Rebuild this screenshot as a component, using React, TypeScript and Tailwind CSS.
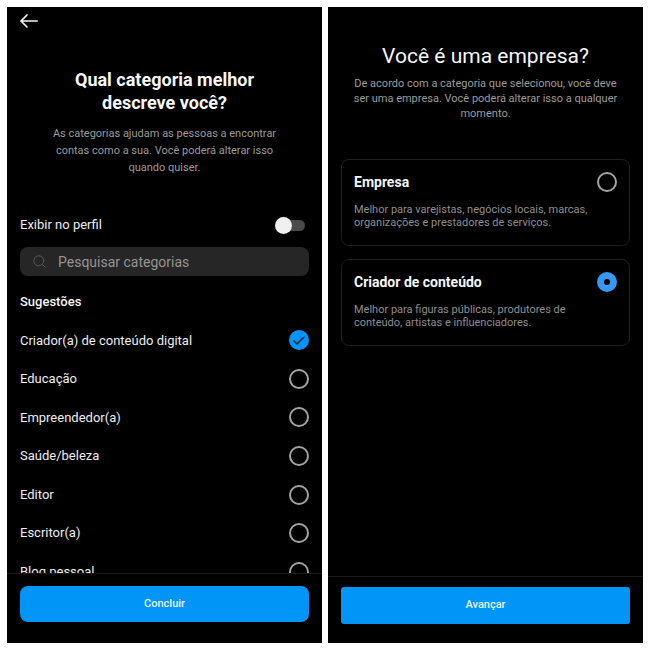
import { useState } from "react";

const categories = [
  "Criador(a) de conteúdo digital",
  "Educação",
  "Empreendedor(a)",
  "Saúde/beleza",
  "Editor",
  "Escritor(a)",
  "Blog pessoal",
];

const accountTypes = [
  {
    id: "empresa",
    title: "Empresa",
    text: "Melhor para varejistas, negócios locais, marcas, organizações e prestadores de serviços.",
  },
  {
    id: "criador",
    title: "Criador de conteúdo",
    text: "Melhor para figuras públicas, produtores de conteúdo, artistas e influenciadores.",
  },
];

function BackIcon() {
  return (
    <svg width="18" height="14" viewBox="0 0 18 14" fill="none" stroke="#f5f5f5" strokeWidth="1.7" strokeLinecap="round" strokeLinejoin="round" aria-hidden="true">
      <path d="M17.2 7H1.2M7 1 1 7l6 6" />
    </svg>
  );
}

function SearchIcon() {
  return (
    <svg width="13" height="13" viewBox="0 0 13 13" fill="none" stroke="#595959" strokeWidth="1" strokeLinecap="round" aria-hidden="true">
      <circle cx="5.8" cy="5.8" r="5" />
      <path d="m9.5 9.5 2.8 2.8" />
    </svg>
  );
}

function CategoryScreen() {
  const [selected, setSelected] = useState(categories[0]);
  return (
    <section className="flex h-full min-w-0 flex-1 flex-col bg-black">
      <header className="flex h-7 shrink-0 items-center px-[13px]">
        <button type="button" aria-label="Voltar">
          <BackIcon />
        </button>
      </header>
      <div className="flex min-h-0 flex-1 flex-col overflow-hidden px-[13px]">
        <h1 className="mx-auto mt-[33px] w-[200px] text-center text-lg leading-[23px] font-bold text-[#f7f7f7]">
          Qual categoria melhor descreve você?
        </h1>
        <p className="mx-auto mt-[11px] w-[240px] text-center text-[11px] leading-[17px] text-[#9b9b9b]">
          As categorias ajudam as pessoas a encontrar contas como a sua. Você poderá alterar isso quando quiser.
        </p>
        <label className="mt-10 flex h-[18px] shrink-0 items-center justify-between text-[13px] text-[#ededed]">
          Exibir no perfil
          <input
            type="checkbox"
            role="switch"
            className="relative mr-1 h-[11px] w-6 appearance-none rounded-full bg-[#4b4b4b] before:absolute before:top-[-3px] before:left-[-6px] before:size-[17px] before:rounded-full before:bg-[#f0f0f0] checked:bg-[#0095f6] checked:before:left-3"
          />
        </label>
        <label className="mt-[13px] flex h-[29px] shrink-0 items-center gap-3 rounded-lg bg-[#262626] px-[13px]">
          <SearchIcon />
          <input
            type="text"
            aria-label="Pesquisar categorias"
            placeholder="Pesquisar categorias"
            className="min-w-0 flex-1 bg-transparent text-sm text-white outline-none placeholder:text-[#949494]"
          />
        </label>
        <h2 className="mt-4 shrink-0 text-[13px] leading-5 font-medium text-[#f5f5f5]">Sugestões</h2>
        <div role="radiogroup" aria-label="Sugestões" className="mt-[9px] grid h-[270px] shrink-0 grid-rows-7">
          {categories.map((name) => (
            <label key={name} className="flex items-center justify-between text-[13px] text-[#ededed]">
              {name}
              <span className="grid place-items-center">
                <input
                  type="radio"
                  name="categoria"
                  checked={selected === name}
                  onChange={() => setSelected(name)}
                  className="col-start-1 row-start-1 size-5 appearance-none rounded-full border-2 border-[#a3a3a3] checked:border-[#0095f6] checked:bg-[#0095f6]"
                />
                {selected === name && (
                  <svg className="pointer-events-none col-start-1 row-start-1" width="12" height="9" viewBox="0 0 12 9" fill="none" stroke="#0b2540" strokeWidth="1.6" strokeLinecap="round" strokeLinejoin="round" aria-hidden="true">
                    <path d="m1 5 3 3 7-7" />
                  </svg>
                )}
              </span>
            </label>
          ))}
        </div>
      </div>
      <footer className="shrink-0 border-t border-[#1a1a1a] px-[13px] pt-3 pb-[21px]">
        <button type="button" className="h-9 w-full rounded-lg bg-[#0095f6] text-[11px] font-medium text-[#e6f4fe]">
          Concluir
        </button>
      </footer>
    </section>
  );
}

function AccountTypeScreen() {
  const [selected, setSelected] = useState("criador");
  return (
    <section className="flex h-full min-w-0 flex-1 flex-col bg-black">
      <div className="min-h-0 flex-1 overflow-hidden px-[13px]">
        <h1 className="mt-[35px] text-center text-[21px] leading-7 text-[#f5f5f5]">Você é uma empresa?</h1>
        <p className="mx-auto mt-[6px] w-[280px] text-center text-[11px] leading-[15px] text-[#9b9b9b]">
          De acordo com a categoria que selecionou, você deve ser uma empresa. Você poderá alterar isso a qualquer momento.
        </p>
        <div role="radiogroup" aria-label="Tipo de conta" className="mt-[38px] flex flex-col gap-[13px]">
          {accountTypes.map((type) => (
            <label key={type.id} className="block rounded-lg border border-[#1f1f1f] px-3 pt-3 pb-4">
              <span className="flex items-center justify-between text-[14px] leading-5 font-bold text-[#f5f5f5]">
                {type.title}
                <input
                  type="radio"
                  name="tipo"
                  checked={selected === type.id}
                  onChange={() => setSelected(type.id)}
                  className="size-5 appearance-none rounded-full border-2 border-[#a3a3a3] checked:border-[7px] checked:border-[#3897f0]"
                />
              </span>
              <span className="mt-[11px] block w-[250px] text-[11px] leading-[13px] text-[#8e8e8e]">{type.text}</span>
            </label>
          ))}
        </div>
      </div>
      <footer className="shrink-0 border-t border-[#1a1a1a] px-[13px] pt-[10px] pb-[19px]">
        <button type="button" className="h-[37px] w-full rounded-[3px] bg-[#0095f6] text-[11px] font-medium text-[#e6f4fe]">
          Avançar
        </button>
      </footer>
    </section>
  );
}

export default function App() {
  return (
    <main className="flex h-screen gap-[6px] bg-white p-[7px] font-[Roboto,sans-serif]">
      <CategoryScreen />
      <AccountTypeScreen />
    </main>
  );
}
